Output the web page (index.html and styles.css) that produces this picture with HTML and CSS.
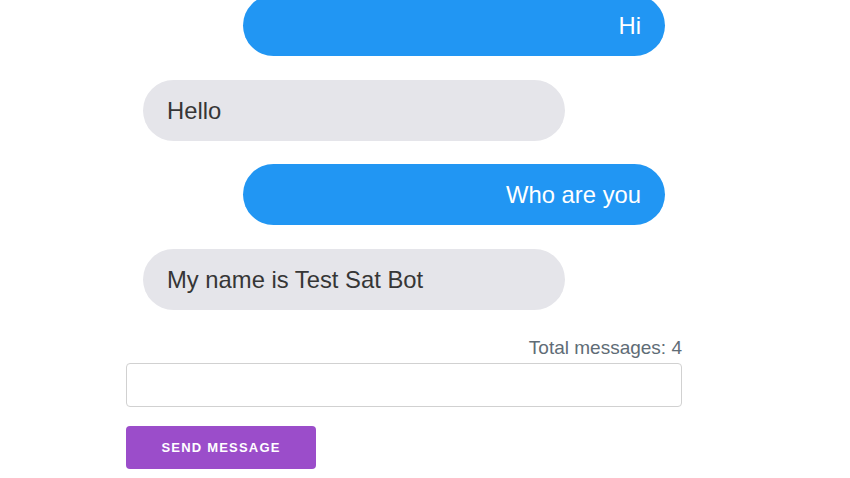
FILE: index.html
```html
<!DOCTYPE html>
<html lang="en">
<head>
<meta charset="utf-8">
<title>Chat</title>
<link rel="stylesheet" href="styles.css">
</head>
<body>
<main class="page">
  <section class="chat">
    <div class="msg user">Hi</div>
    <div class="msg bot">Hello</div>
    <div class="msg user">Who are you</div>
    <div class="msg bot">My name is Test Sat Bot</div>
  </section>
  <div class="count">Total messages: 4</div>
  <form class="composer">
    <input class="field" type="text" aria-label="Message">
    <button class="send" type="button">Send message</button>
  </form>
</main>
</body>
</html>
```
FILE: styles.css
```css
html, body {
  margin: 0;
  padding: 0;
  background: #ffffff;
}
body {
  font-family: "Liberation Sans", Arial, sans-serif;
  color: #363636;
  overflow: hidden;
}
.page {
  width: 556px;
  margin-left: 126px;
  margin-top: -5px;
}
.chat {
  display: flex;
  flex-direction: column;
  gap: 23.6px;
  padding: 0 17px;
}
.msg {
  width: 422px;
  box-sizing: border-box;
  height: 61px;
  display: flex;
  align-items: center;
  padding: 0 24px;
  border-radius: 31px;
  font-size: 23.8px;
  line-height: 29px;
}
.msg.user {
  align-self: flex-end;
  justify-content: flex-end;
  background: #2196f3;
  color: #ffffff;
}
.msg.bot {
  align-self: flex-start;
  background: #e5e5ea;
  color: #363636;
}
.count {
  margin-top: 27.6px;
  text-align: right;
  font-size: 19px;
  line-height: 22px;
  color: #606c76;
}
.composer {
  margin: 3.2px 0 0;
  display: flex;
  flex-direction: column;
  align-items: flex-start;
}
.field {
  width: 556px;
  height: 44px;
  box-sizing: border-box;
  border: 1px solid #d1d1d1;
  border-radius: 4px;
  background: #fff;
  margin: 0;
  padding: 0 10px;
  font: inherit;
}
.send {
  margin-top: 19px;
  width: 190px;
  height: 43px;
  border: none;
  border-radius: 4px;
  background: #9b4dca;
  color: #ffffff;
  font-family: "Liberation Sans", Arial, sans-serif;
  font-weight: 700;
  font-size: 13px;
  letter-spacing: 1.2px;
  text-transform: uppercase;
  padding: 0;
  cursor: pointer;
}
```
